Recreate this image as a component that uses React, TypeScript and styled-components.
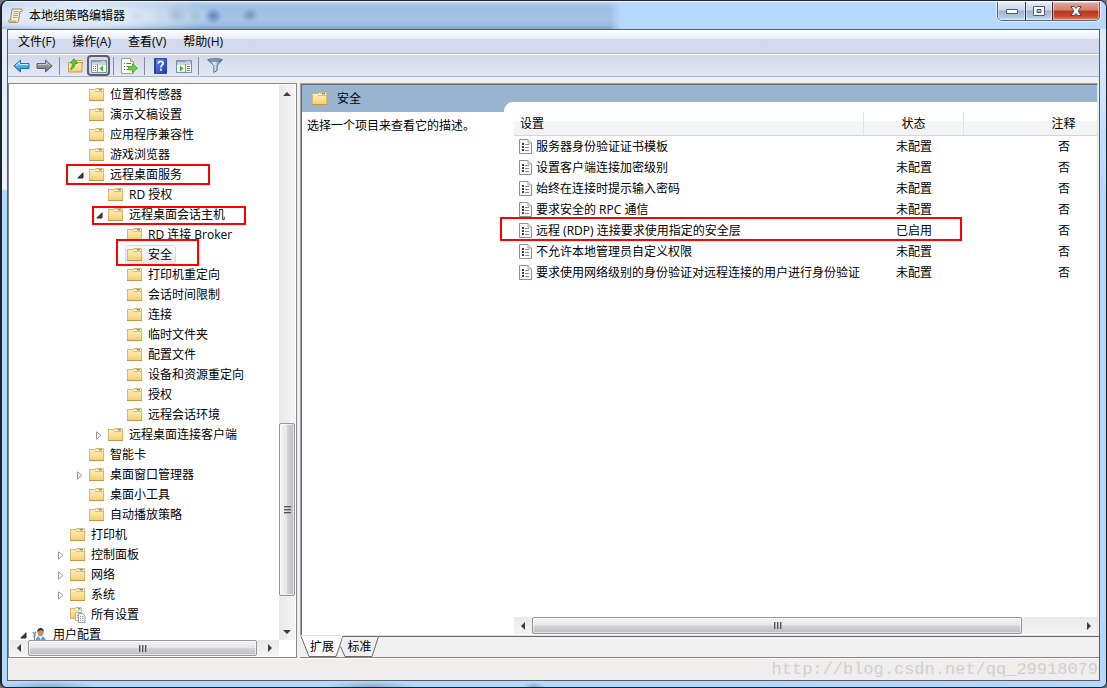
import React from "react";
import styled, { createGlobalStyle } from "styled-components";

const GlobalStyle = createGlobalStyle`
  * { box-sizing: border-box; }
  html, body { margin: 0; padding: 0; background: #6f747c; }
  body, button, table {
    font-family: "Open Sans", "Noto Sans CJK SC", sans-serif;
    font-size: 12px;
    line-height: 20px;
    color: #000;
  }
  button { margin: 0; padding: 0; border: 0; background: none; }
  svg { display: block; flex: none; }
`;

const Window = styled.div`
  height: 100vh;
  display: flex;
  flex-direction: column;
  padding: 0 6px 6px 5px;
  border: 1px solid #1d222b;
  border-left-width: 2px;
  border-radius: 8px 8px 6px 6px;
  overflow: hidden;
  background:
    radial-gradient(ellipse 50px 6px at 46px 100%, #8eabcb, transparent) no-repeat,
    radial-gradient(ellipse 46px 6px at 368px 100%, #8fa9c5, transparent) no-repeat,
    radial-gradient(ellipse 12px 5px at 532px 100%, #8fa9c5, transparent) no-repeat,
    linear-gradient(#ddebf9, #eaf3fc 188px, transparent 190px) left top / 5px 100% no-repeat,
    linear-gradient(#ddebf9, #d5e8fc 60px, transparent 190px) right top / 6px 100% no-repeat,
    #b6d8fc;
`;

const TitleBar = styled.header`
  flex: none;
  height: 28px;
  display: flex;
  align-items: flex-start;
  margin: 0 -6px 0 -5px;
  padding: 0 6px;
  border-top: 1px solid #f2f8fe;
  background:
    radial-gradient(ellipse 150px 22px at 70px 14px, rgba(238, 245, 252, 0.95), rgba(238, 245, 252, 0.7) 50%, transparent) no-repeat,
    radial-gradient(ellipse 9px 7px at 136px 14px, rgba(90, 120, 155, 0.6), transparent) no-repeat,
    radial-gradient(ellipse 10px 8px at 156px 14px, rgba(120, 160, 130, 0.5), transparent) no-repeat,
    radial-gradient(ellipse 12px 9px at 174px 13px, rgba(90, 115, 145, 0.6), transparent) no-repeat,
    radial-gradient(ellipse 8px 7px at 193px 14px, rgba(115, 160, 130, 0.5), transparent) no-repeat,
    radial-gradient(ellipse 9px 8px at 211px 14px, rgba(50, 90, 150, 0.7), transparent) no-repeat,
    radial-gradient(ellipse 9px 7px at 248px 13px, rgba(90, 120, 160, 0.6), transparent) no-repeat,
    linear-gradient(90deg, transparent 608px, #b6d8fc 618px) no-repeat,
    linear-gradient(#b9cfec, #9dbde3 6px, #a3c3e9 18px, #9abbe2 23px, #7f9fc4 27px);
`;

const Title = styled.h1`
  flex: 1;
  display: flex;
  align-items: center;
  gap: 6px;
  height: 27px;
  margin: 0;
  font-size: 12px;
  font-weight: 400;
`;

const Caption = styled.div`
  display: flex;
  height: 19px;
  border: 1px solid #58647a;
  border-top: 0;
  border-radius: 0 0 5px 5px;
  overflow: hidden;
  box-shadow: 0 0 0 1px rgba(255, 255, 255, 0.6);
`;

const CaptionButton = styled.button<{ $close?: boolean }>`
  display: flex;
  align-items: center;
  justify-content: center;
  width: ${(p) => (p.$close ? 47 : 27)}px;
  border-left: ${(p) => (p.$close ? "1px solid #5b2018" : "0")};
  box-shadow: inset 0 0 0 1px rgba(255, 255, 255, 0.45);
  background: ${(p) =>
    p.$close
      ? "linear-gradient(#e5a99b, #d3806e 45%, #b93422 50%, #c84b2c 80%, #d98a66)"
      : "linear-gradient(#e3eefa, #c4d3e6 45%, #9fb3cd 50%, #b0c4dc 80%, #cfe0f2)"};
  & + & { border-left: 1px solid ${(p) => (p.$close ? "#5b2018" : "#58647a")}; }
`;

const Client = styled.main`
  flex: 1;
  min-height: 0;
  display: flex;
  flex-direction: column;
  border: 1px solid #56606d;
  background: #f0f0f0;
`;

const MenuBar = styled.nav`
  flex: none;
  display: flex;
  gap: 1px;
  height: 24px;
  padding: 0 2px;
  border-bottom: 1px solid #b3b5ba;
  background: linear-gradient(#fff, #e6ebf5 9px, #d3d9ec 9px, #d4daed);
`;

const MenuItem = styled.button`
  padding: 0 8px;
`;

const ToolBar = styled.div`
  flex: none;
  display: flex;
  align-items: center;
  height: 23px;
  padding: 0 2px;
  border-top: 1px solid #fff;
  border-bottom: 1px solid #a9b4cb;
  background: linear-gradient(#d3d9ec, #e2e8f5);
`;

const Tool = styled.button<{ $on?: boolean }>`
  display: flex;
  align-items: center;
  justify-content: center;
  width: 23px;
  height: 21px;
  border-radius: 4px;
  border: ${(p) => (p.$on ? "2px solid #59606f" : "0")};
  background: ${(p) => (p.$on ? "#d5dae6" : "none")};
`;

const ToolSeparator = styled.span`
  width: 1px;
  height: 18px;
  margin: 0 4px 0 3px;
  background: #858b98;
`;

const Panes = styled.div`
  flex: 1;
  min-height: 0;
  display: flex;
  gap: 3px;
  padding-top: 6px;
`;

const TreePane = styled.section`
  flex: none;
  width: 289px;
  display: grid;
  grid-template-columns: minmax(0, 1fr) 16px;
  grid-template-rows: minmax(0, 1fr) 16px;
  padding: 1px;
  border: 1px solid #828790;
  background: #fff;
`;

const TreeList = styled.ul`
  margin: 0;
  padding: 0;
  overflow: hidden;
  list-style: none;
`;

const TreeRow = styled.li<{ $level: number }>`
  position: relative;
  display: flex;
  align-items: center;
  height: 20px;
  padding-left: ${(p) => 6 + p.$level * 19}px;
  white-space: nowrap;
`;

const Expander = styled.button`
  display: flex;
  align-items: center;
  justify-content: center;
  width: 14px;
  height: 20px;
`;

const TreeLabel = styled.span<{ $selected?: boolean }>`
  display: flex;
  align-items: center;
  gap: 5px;
  height: 20px;
  padding: 0 3px 0 1px;
  border-radius: 3px;
  border: 1px solid ${(p) => (p.$selected ? "#d9d9d9" : "transparent")};
  background: ${(p) => (p.$selected ? "linear-gradient(#fafafa, #e6e6e6)" : "none")};
`;

const IconSlot = styled.span`
  display: flex;
  width: 16px;
`;

const Mark = styled.span<{ $x: number; $y: number; $w: number; $h: number }>`
  position: absolute;
  z-index: 1;
  left: ${(p) => p.$x}px;
  top: ${(p) => p.$y}px;
  width: ${(p) => p.$w}px;
  height: ${(p) => p.$h}px;
  border: 2px solid #f00;
  pointer-events: none;
`;

const Track = styled.div<{ $vertical?: boolean }>`
  display: flex;
  flex-direction: ${(p) => (p.$vertical ? "column" : "row")};
  background: linear-gradient(${(p) => (p.$vertical ? "90deg" : "180deg")}, #e9e9e9, #f4f4f4);
`;

const ArrowButton = styled.button`
  flex: 0 0 17px;
  display: flex;
  align-items: center;
  justify-content: center;
`;

const TrackSpace = styled.span<{ $grow: number }>`
  flex: ${(p) => p.$grow} 1 0;
`;

const Thumb = styled.div<{ $grow: number; $vertical?: boolean }>`
  flex: ${(p) => p.$grow} 1 0;
  display: flex;
  align-items: center;
  justify-content: center;
  border: 1px solid #979797;
  border-radius: 2px;
  box-shadow: inset 0 0 0 1px rgba(255, 255, 255, 0.6);
  background: linear-gradient(${(p) => (p.$vertical ? "90deg" : "180deg")}, #f4f4f4, #e6e6e6 48%, #d4d4d6 52%, #bebec2);
`;

const ResultColumn = styled.section`
  flex: 1;
  min-width: 0;
  display: flex;
  flex-direction: column;
  border-bottom: 1px solid #828790;
`;

const ResultPane = styled.div`
  flex: 1;
  min-height: 0;
  display: flex;
  flex-direction: column;
  margin-right: 1px;
  border: 1px solid #a0a0a0;
  border-right-color: #e3e3e3;
  border-bottom-color: #e3e3e3;
  background: #fff;
`;

const ResultInner = styled.div`
  flex: 1;
  min-height: 0;
  display: flex;
  flex-direction: column;
  border-top: 1px solid #696969;
  border-left: 1px solid #696969;
`;

const ResultTitle = styled.h2`
  flex: none;
  display: flex;
  align-items: center;
  gap: 10px;
  height: 27px;
  margin: 0;
  padding-left: 10px;
  background: #99b4d1;
  font-size: 12px;
  font-weight: 400;
`;

const ResultBody = styled.div`
  flex: 1;
  min-height: 0;
  display: flex;
`;

const Description = styled.p`
  flex: none;
  width: 202px;
  margin: 0;
  padding: 4px 5px;
`;

const ListArea = styled.div`
  position: relative;
  flex: 1;
  min-width: 0;
  display: flex;
  flex-direction: column;
  margin-top: -10px;
  padding: 10px 0 1px 10px;
  border-top-left-radius: 9px;
  background: #fff;
`;

const ListScroll = styled.div`
  flex: none;
  display: grid;
  height: 17px;
`;

const TableClip = styled.div`
  flex: 1;
  min-height: 0;
  overflow: hidden;
`;

const Table = styled.table`
  width: 650px;
  table-layout: fixed;
  border-collapse: separate;
  border-spacing: 0;
`;

const Th = styled.th<{ $w: number; $left?: boolean }>`
  width: ${(p) => p.$w}px;
  height: 24px;
  padding: 0 6px;
  border-bottom: 1px solid #d5d5d5;
  border-right: 1px solid #e2e3e6;
  background: linear-gradient(#fff 9px, #f5f6f8 9px, #f1f2f4);
  font-weight: 400;
  text-align: ${(p) => (p.$left ? "left" : "center")};
`;

const Td = styled.td<{ $left?: boolean }>`
  height: 21px;
  padding: 0 0 0 ${(p) => (p.$left ? 5 : 0)}px;
  text-align: center;
  white-space: nowrap;
`;

const Setting = styled.span`
  display: flex;
  align-items: center;
  gap: 4px;
`;

const TabStrip = styled.div`
  flex: none;
  display: flex;
  height: 21px;
  background: #f0f0f0;
`;

const Tab = styled.button<{ $w: number }>`
  position: relative;
  width: ${(p) => p.$w}px;
  & + & { margin-left: -4px; }
`;

const TabShape = styled.svg`
  position: absolute;
  left: 0;
  top: 0;
`;

const TabText = styled.span`
  position: relative;
`;

const TabRest = styled.span`
  flex: 1;
  margin-left: -1px;
  border-top: 1px solid #696969;
`;

const StatusBar = styled.footer`
  flex: none;
  display: flex;
  align-items: center;
  justify-content: flex-end;
  height: 22px;
  padding-right: 1px;
  border-top: 1px solid #fff;
  background: #f0eded;
  color: #d2d0cd;
  font-family: "Liberation Mono", monospace;
  font-size: 17px;
`;

const Gradients = () => (
  <svg width="0" height="0" aria-hidden="true">
    <defs>
      <linearGradient id="folder" x1="0" y1="0" x2="0" y2="1">
        <stop offset="0" stopColor="#fdebae" />
        <stop offset="0.5" stopColor="#fbe195" />
        <stop offset="1" stopColor="#f2cc78" />
      </linearGradient>
      <linearGradient id="back" x1="0" y1="0" x2="0" y2="1">
        <stop offset="0" stopColor="#8fdcfb" />
        <stop offset="1" stopColor="#1186d8" />
      </linearGradient>
      <linearGradient id="forward" x1="0" y1="0" x2="0" y2="1">
        <stop offset="0" stopColor="#b5b5b5" />
        <stop offset="1" stopColor="#6c6c6c" />
      </linearGradient>
      <linearGradient id="help" x1="0" y1="0" x2="1" y2="1">
        <stop offset="0" stopColor="#6b8fec" />
        <stop offset="1" stopColor="#1c3ab0" />
      </linearGradient>
      <linearGradient id="funnel" x1="0" y1="0" x2="1" y2="0">
        <stop offset="0" stopColor="#5f8ea6" />
        <stop offset="0.45" stopColor="#d9ecf4" />
        <stop offset="1" stopColor="#4d748a" />
      </linearGradient>
    </defs>
  </svg>
);

const FolderIcon = () => (
  <svg width="15" height="14" viewBox="0 0 15 14">
    <path d="M0 1h6l1-1h7l1 1v12H0z" fill="#dcb768" />
    <path d="M1 2h13v10.500H1z" fill="url(#folder)" />
    <path d="M7 1h7v2H7z" fill="#fff7dc" />
    <path d="M8 1h2v1H8z" fill="#e8c878" />
    <path d="M10 1h3v1.500h-3z" fill="#4f9fe6" />
    <path d="M6 3.500h8" stroke="#e2bd70" />
    <path d="M0 12.500h15" stroke="#c1974b" />
  </svg>
);

const AllSettingsIcon = () => (
  <svg width="16" height="16" viewBox="0 0 16 16">
    <path d="M0 1h5l1-1h5l1 1v11H0z" fill="#dcb768" />
    <path d="M1 2h10v9H1z" fill="url(#folder)" />
    <path d="M6 1h5v2H6z" fill="#fff7dc" />
    <path d="M8 1h2.500v1.500H8z" fill="#4f9fe6" />
    <path d="M5.500 5.500h5v8h-5z" fill="#fff" stroke="#b0b0b0" />
    <path d="M7 8.500h2M7 10.500h2" stroke="#9aa7b8" />
    <path d="M8.500 6.500h4l2.500 2.500v6.500H8.500z" fill="#fff" stroke="#9a9a9a" />
    <path d="M10 9.500h1m1 0h1.500M10 11.500h1m1 0h1.500M10 13.500h1m1 0h1.500" stroke="#8c97ae" />
  </svg>
);

const UserIcon = () => (
  <svg width="16" height="16" viewBox="0 0 16 16">
    <path d="M1 5l1.500 2L4 5M2.500 7v6M1 9l3-1" stroke="#7b8894" strokeWidth="1.300" fill="none" />
    <path d="M3.500 15c0-4 2-6 5-6s5.500 2 5.500 6z" fill="#5b9bd8" />
    <path d="M7 9l1.500 4L10.500 9z" fill="#fff" />
    <ellipse cx="8.500" cy="5.500" rx="3" ry="3.700" fill="#c48f66" />
    <path d="M5.200 5c0-3 1.500-4 3.500-4s3.300 1.500 3 4c-1-2-4-2.500-6.500 0z" fill="#3f2d22" />
  </svg>
);

const PolicyIcon = () => (
  <svg width="13" height="15" viewBox="0 0 13 15">
    <path d="M.5.5h8.500L12.500 4v10.500H.5z" fill="#fdfdfd" stroke="#8f8f8f" />
    <path d="M9 .5V4h3.500" fill="#e9e9e9" stroke="#a5a5a5" />
    <path d="M3 4h2v2H3zM3 7h2v2H3zM3 10h2v2H3z" fill="#3c3c46" />
    <path d="M6 5.500h4M6 8.500h4M6 11.500h4" stroke="#8b86a8" />
  </svg>
);

const ScrollIcon = () => (
  <svg width="15" height="15" viewBox="0 0 15 15">
    <path d="M4 1h9.500c1 0 1.300 2 .2 2.500H12L10.500 13c-.3 1.200-1 1.500-2 1.500H1.500c-1.300 0-1.300-2.500 0-2.500h1z" fill="#f5ecd2" stroke="#a08a62" />
    <path d="M2 12.500h6.500c-.3.700 0 1.500.5 1.800H2c-1 0-1-1.800 0-1.800z" fill="#c7ae7c" />
    <path d="M5.500 3.500h5M5.300 5.500h5M5 7.500h5M4.800 9.500h4.700" stroke="#a3a3a3" />
  </svg>
);

const BackIcon = () => (
  <svg width="17" height="14" viewBox="0 0 17 14">
    <path d="M.8 7L7.500 1v3.500h8.500v5H7.500V13z" fill="url(#back)" stroke="#2b6ca8" strokeLinejoin="round" />
    <path d="M3 6.700L6.500 3.500v2H15" fill="none" stroke="#c5effd" />
  </svg>
);

const ForwardIcon = () => (
  <svg width="17" height="14" viewBox="0 0 17 14">
    <path d="M16.200 7L9.500 1v3.500H1v5h8.500V13z" fill="url(#forward)" stroke="#626262" strokeLinejoin="round" />
    <path d="M2 5.500h8.500v-2L14 6.700" fill="none" stroke="#c9c9c9" />
  </svg>
);

const UpFolderIcon = () => (
  <svg width="15" height="15" viewBox="0 0 15 15">
    <path d="M8.500 4V2.500h5l1 1V6z" fill="#fff6d0" stroke="#c99f4c" />
    <path d="M.5 4.500h13.500v9.500H.5z" fill="url(#folder)" stroke="#c99f4c" />
    <path d="M2.500 11.500C6 10.500 7 8 7 5.500h2.500L6 .8 2.200 5h2c.2 2.500-.2 4.500-1.700 6.500z" fill="#5ccb33" stroke="#2d8c1c" strokeWidth=".7" />
  </svg>
);

const PaneIcon = ({ mirrored }: { mirrored?: boolean }) => (
  <svg width="16" height="14" viewBox="0 0 16 14">
    <path d="M.5 1.500h15v12H.5z" fill="#f4f6f8" stroke="#7f8c99" />
    <path d="M1 2.500h14" stroke="#8fa0b2" strokeWidth="2" />
    <path d="M10.500 2.500h1m1 0h1" stroke="#fff" />
    <path d="M1 5h14" stroke="#a9b4bf" />
    {mirrored ? (
      <>
        <path d="M9.500 5v8.500" stroke="#8593a1" />
        <path d="M11 7.500h3M11 9.500h3M11 11.500h3" stroke="#6a7f95" />
        <path d="M4 6.500v6L7.500 9.500z" fill="#3fae2a" />
      </>
    ) : (
      <>
        <path d="M6.500 5v8.500" stroke="#8593a1" />
        <path d="M2 7.500h1m1 0h1M2 9.500h1m1 0h1M2 11.500h1m1 0h1" stroke="#6a7f95" />
        <path d="M12 6.500v6L8.500 9.500z" fill="#3fae2a" />
      </>
    )}
  </svg>
);

const ExportIcon = () => (
  <svg width="17" height="16" viewBox="0 0 17 16">
    <path d="M.5.5h9l3 3v12H.5z" fill="#fdf9e4" stroke="#a5a092" />
    <path d="M9.500.5v3h3" fill="#e9e4cc" stroke="#a5a092" />
    <path d="M3 5.500h1m1.500 0H10M3 8.500h1m1.500 0H8M3 11.500h1m1.500 0H8" stroke="#6a6a72" />
    <path d="M7.500 8.500h4V5.800l5 4.400-5 4.300v-2.700h-4z" fill="#6dcf3f" stroke="#3a9a22" strokeWidth=".8" />
  </svg>
);

const HelpIcon = () => (
  <svg width="13" height="16" viewBox="0 0 14 17">
    <path d="M.5.5h13v16H.5z" fill="url(#help)" stroke="#243e9c" />
    <path d="M1.500 1v15" stroke="#1d369a" />
    <path d="M4.800 5.800C4.800 2.800 9.800 2.700 9.800 5.600c0 2-2.400 2-2.400 4.400" fill="none" stroke="#fff" strokeWidth="1.900" />
    <path d="M6.400 11.500h2v2h-2z" fill="#fff" />
  </svg>
);

const FilterIcon = () => (
  <svg width="16" height="15" viewBox="0 0 16 15">
    <path d="M.8 1.500h14.400c0 1.500-5 5-5 6.500v4.500l-3.400 2V8C6.800 6.500.8 3 .8 1.500z" fill="url(#funnel)" stroke="#4b6c7f" strokeWidth=".9" />
    <ellipse cx="8" cy="1.900" rx="7" ry="1.400" fill="#7ea0b1" stroke="#4b6c7f" strokeWidth=".7" />
  </svg>
);

const OpenArrow = () => (
  <svg width="7" height="7" viewBox="0 0 7 7">
    <path d="M6 .8V6H.8z" fill="#404040" stroke="#262626" />
  </svg>
);

const ClosedArrow = () => (
  <svg width="6" height="9" viewBox="0 0 6 9">
    <path d="M.5.8v7.400L5 4.500z" fill="#fff" stroke="#989898" />
  </svg>
);

const arrows = {
  up: "M0 6l4-4 4 4z",
  down: "M0 2l4 4 4-4z",
  left: "M6 0L2 4l4 4z",
  right: "M2 0l4 4-4 4z",
};

const ScrollArrow = ({ dir, label }: { dir: keyof typeof arrows; label: string }) => (
  <ArrowButton aria-label={label}>
    <svg width="8" height="8" viewBox="0 0 8 8">
      <path d={arrows[dir]} fill="#3c3c3c" />
    </svg>
  </ArrowButton>
);

const Grip = ({ vertical }: { vertical?: boolean }) => (
  <svg width="9" height="9" viewBox="0 0 9 9">
    <path d={vertical ? "M1 1.500h7M1 4.500h7M1 7.500h7" : "M1.500 1v7M4.500 1v7M7.500 1v7"} stroke="#56565a" />
    <path d={vertical ? "M1 2.500h7M1 5.500h7M1 8.500h7" : "M2.500 1v7M5.500 1v7M8.500 1v7"} stroke="#a9a9ad" />
  </svg>
);

const ScrollBar = ({ vertical, parts }: { vertical?: boolean; parts: [number, number, number] }) => (
  <Track $vertical={vertical}>
    <ScrollArrow dir={vertical ? "up" : "left"} label={vertical ? "向上" : "向左"} />
    <TrackSpace $grow={parts[0]} />
    <Thumb $grow={parts[1]} $vertical={vertical}>
      <Grip vertical={vertical} />
    </Thumb>
    <TrackSpace $grow={parts[2]} />
    <ScrollArrow dir={vertical ? "down" : "right"} label={vertical ? "向下" : "向右"} />
  </Track>
);

type Node = {
  text: string;
  level: number;
  state?: "open" | "closed";
  icon?: "all" | "user";
  selected?: boolean;
  mark?: [number, number, number, number];
};

const nodes: Node[] = [
  { text: "位置和传感器", level: 3 },
  { text: "演示文稿设置", level: 3 },
  { text: "应用程序兼容性", level: 3 },
  { text: "游戏浏览器", level: 3 },
  { text: "远程桌面服务", level: 3, state: "open", mark: [56, -1, 144, 21] },
  { text: "RD 授权", level: 4 },
  { text: "远程桌面会话主机", level: 4, state: "open", mark: [82, 1, 154, 19] },
  { text: "RD 连接 Broker", level: 5 },
  { text: "安全", level: 5, selected: true, mark: [106, -6, 83, 27] },
  { text: "打印机重定向", level: 5 },
  { text: "会话时间限制", level: 5 },
  { text: "连接", level: 5 },
  { text: "临时文件夹", level: 5 },
  { text: "配置文件", level: 5 },
  { text: "设备和资源重定向", level: 5 },
  { text: "授权", level: 5 },
  { text: "远程会话环境", level: 5 },
  { text: "远程桌面连接客户端", level: 4, state: "closed" },
  { text: "智能卡", level: 3 },
  { text: "桌面窗口管理器", level: 3, state: "closed" },
  { text: "桌面小工具", level: 3 },
  { text: "自动播放策略", level: 3 },
  { text: "打印机", level: 2 },
  { text: "控制面板", level: 2, state: "closed" },
  { text: "网络", level: 2, state: "closed" },
  { text: "系统", level: 2, state: "closed" },
  { text: "所有设置", level: 2, icon: "all" },
  { text: "用户配置", level: 0, state: "open", icon: "user" },
];

const policies = [
  ["服务器身份验证证书模板", "未配置"],
  ["设置客户端连接加密级别", "未配置"],
  ["始终在连接时提示输入密码", "未配置"],
  ["要求安全的 RPC 通信", "未配置"],
  ["远程 (RDP) 连接要求使用指定的安全层", "已启用"],
  ["不允许本地管理员自定义权限", "未配置"],
  ["要求使用网络级别的身份验证对远程连接的用户进行身份验证", "未配置"],
];

const Tree = () => (
  <TreeList>
    {nodes.map((n) => (
      <TreeRow key={n.text} $level={n.level}>
        <Expander aria-label={n.state === "open" ? "折叠" : "展开"} disabled={!n.state}>
          {n.state === "open" && <OpenArrow />}
          {n.state === "closed" && <ClosedArrow />}
        </Expander>
        <TreeLabel $selected={n.selected}>
          <IconSlot>
            {n.icon === "all" ? <AllSettingsIcon /> : n.icon === "user" ? <UserIcon /> : <FolderIcon />}
          </IconSlot>
          {n.text}
        </TreeLabel>
        {n.mark && <Mark $x={n.mark[0]} $y={n.mark[1]} $w={n.mark[2]} $h={n.mark[3]} />}
      </TreeRow>
    ))}
  </TreeList>
);

const PolicyTable = () => (
  <Table>
    <thead>
      <tr>
        <Th $w={350} $left>设置</Th>
        <Th $w={100}>状态</Th>
        <Th $w={200}>注释</Th>
      </tr>
    </thead>
    <tbody>
      {policies.map(([name, state]) => (
        <tr key={name}>
          <Td $left>
            <Setting>
              <PolicyIcon />
              {name}
            </Setting>
          </Td>
          <Td>{state}</Td>
          <Td>否</Td>
        </tr>
      ))}
    </tbody>
  </Table>
);

export default function App() {
  return (
    <>
      <GlobalStyle />
      <Window>
        <TitleBar>
          <Title>
            <ScrollIcon />
            本地组策略编辑器
          </Title>
          <Caption>
            <CaptionButton aria-label="最小化">
              <svg width="12" height="5" viewBox="0 0 12 5">
                <path d="M.5.5h11v4H.5z" fill="#fff" stroke="#525a69" />
              </svg>
            </CaptionButton>
            <CaptionButton aria-label="最大化">
              <svg width="12" height="10" viewBox="0 0 12 10">
                <path d="M.5.5h11v9H.5zM4 3.500h4v3H4z" fill="#fff" fillRule="evenodd" stroke="#525a69" />
              </svg>
            </CaptionButton>
            <CaptionButton $close aria-label="关闭">
              <svg width="12" height="10" viewBox="0 0 12 10">
                <path d="M.8.5h3.500L6 2.600 7.700.5h3.500L8 5l3.200 4.500H7.700L6 7.400 4.300 9.500H.8L4 5z" fill="#fff" stroke="#5a4450" />
              </svg>
            </CaptionButton>
          </Caption>
        </TitleBar>
        <Client>
          <MenuBar>
            <MenuItem>文件(F)</MenuItem>
            <MenuItem>操作(A)</MenuItem>
            <MenuItem>查看(V)</MenuItem>
            <MenuItem>帮助(H)</MenuItem>
          </MenuBar>
          <ToolBar>
            <Tool aria-label="后退"><BackIcon /></Tool>
            <Tool aria-label="前进"><ForwardIcon /></Tool>
            <ToolSeparator />
            <Tool aria-label="上一级"><UpFolderIcon /></Tool>
            <Tool aria-label="显示控制台树" $on><PaneIcon /></Tool>
            <ToolSeparator />
            <Tool aria-label="导出列表"><ExportIcon /></Tool>
            <ToolSeparator />
            <Tool aria-label="帮助"><HelpIcon /></Tool>
            <Tool aria-label="显示操作窗格"><PaneIcon mirrored /></Tool>
            <ToolSeparator />
            <Tool aria-label="筛选器"><FilterIcon /></Tool>
          </ToolBar>
          <Panes>
            <TreePane>
              <Tree />
              <ScrollBar vertical parts={[322, 171, 27]} />
              <ScrollBar parts={[1, 229, 5]} />
            </TreePane>
            <ResultColumn>
              <ResultPane>
                <ResultInner>
                  <ResultTitle>
                    <FolderIcon />
                    安全
                  </ResultTitle>
                  <ResultBody>
                    <Description>选择一个项目来查看它的描述。</Description>
                    <ListArea>
                      <TableClip>
                        <PolicyTable />
                      </TableClip>
                      <ListScroll>
                        <ScrollBar parts={[1, 490, 58]} />
                      </ListScroll>
                      <Mark $x={-4} $y={115} $w={462} $h={24} />
                    </ListArea>
                  </ResultBody>
                </ResultInner>
              </ResultPane>
              <TabStrip>
                <Tab $w={44}>
                  <TabShape width="44" height="21" viewBox="0 0 44 21">
                    <path d="M1 0l8 20.500h27L43 0" fill="#fff" stroke="#696969" />
                  </TabShape>
                  <TabText>扩展</TabText>
                </Tab>
                <Tab $w={39}>
                  <TabShape width="39" height="21" viewBox="0 0 39 21">
                    <path d="M.5 10.500l4.500 10h27L38.500.5H3" fill="#f0f0f0" stroke="#696969" />
                  </TabShape>
                  <TabText>标准</TabText>
                </Tab>
                <TabRest />
              </TabStrip>
            </ResultColumn>
          </Panes>
          <StatusBar>http://blog.csdn.net/qq_29918079</StatusBar>
        </Client>
      </Window>
      <Gradients />
    </>
  );
}
